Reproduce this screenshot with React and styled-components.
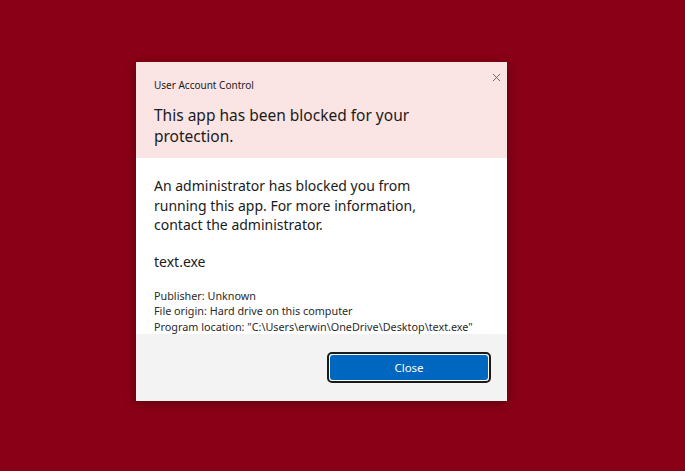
import React from 'react'
import styled, { createGlobalStyle } from 'styled-components'

const GlobalStyle = createGlobalStyle`
  html, body {
    margin: 0;
    padding: 0;
    background: #8a0016;
  }
  body {
    font-family: 'Noto Sans', 'Open Sans', sans-serif;
  }
`

const Screen = styled.div`
  width: 685px;
  height: 471px;
  background: #8a0016;
  display: flex;
  justify-content: flex-start;
  align-items: flex-start;
  padding: 62px 0 0 136px;
  box-sizing: border-box;
`

const Dialog = styled.div`
  width: 371px;
  display: flex;
  flex-direction: column;
  background: #ffffff;
  box-shadow: 0 2px 10px rgba(0, 0, 0, 0.35);
`

const Header = styled.div`
  position: relative;
  background: #fbe4e4;
  padding: 16px 18px 11px 18px;
`

const Caption = styled.div`
  font-size: 10px;
  line-height: 14px;
  color: #1b1b1b;
  margin-bottom: 13px;
`

const Title = styled.div`
  font-size: 15.5px;
  line-height: 21px;
  color: #1b1b1b;
  width: 290px;
`

const CloseX = styled.button`
  position: absolute;
  top: 7px;
  right: 3px;
  width: 16px;
  height: 16px;
  border: none;
  background: transparent;
  padding: 0;
  display: flex;
  align-items: center;
  justify-content: center;
  color: #5c5c5c;
`

const Body = styled.div`
  padding: 18px 18px 0 18px;
  color: #1b1b1b;
`

const Message = styled.div`
  font-size: 14px;
  line-height: 19.5px;
`

const FileName = styled.div`
  font-size: 14px;
  line-height: 20px;
  margin-top: 17px;
`

const Details = styled.div`
  margin-top: 16px;
  font-size: 10.8px;
  line-height: 15.5px;
  color: #2a2a2a;
`

const Footer = styled.div`
  background: #f3f3f3;
  display: flex;
  justify-content: flex-end;
  padding: 18px 16px 18px 18px;
`

const PrimaryButton = styled.button`
  width: 164px;
  height: 31px;
  box-sizing: border-box;
  border: 2px solid #1a1a1a;
  border-radius: 5px;
  padding: 1px;
  background: #ffffff;
  display: flex;
`

const ButtonFace = styled.span`
  flex: 1;
  background: #0067c0;
  border-radius: 3px;
  color: #ffffff;
  font-family: 'Noto Sans', 'Open Sans', sans-serif;
  font-size: 11.5px;
  display: flex;
  align-items: center;
  justify-content: center;
`

export default function App() {
  return (
    <>
      <GlobalStyle />
      <Screen>
        <Dialog>
          <Header>
            <Caption>User Account Control</Caption>
            <Title>This app has been blocked for your protection.</Title>
            <CloseX aria-label="Close">
              <svg width="9" height="9" viewBox="0 0 10 10">
                <path d="M1 1 L9 9 M9 1 L1 9" stroke="currentColor" strokeWidth="1" />
              </svg>
            </CloseX>
          </Header>
          <Body>
            <Message>
              An administrator has blocked you from
              <br />
              running this app. For more information,
              <br />
              contact the administrator.
            </Message>
            <FileName>text.exe</FileName>
            <Details>
              <div>Publisher: Unknown</div>
              <div>File origin: Hard drive on this computer</div>
              <div>Program location: "C:\Users\erwin\OneDrive\Desktop\text.exe"</div>
            </Details>
          </Body>
          <Footer>
            <PrimaryButton>
              <ButtonFace>Close</ButtonFace>
            </PrimaryButton>
          </Footer>
        </Dialog>
      </Screen>
    </>
  )
}
